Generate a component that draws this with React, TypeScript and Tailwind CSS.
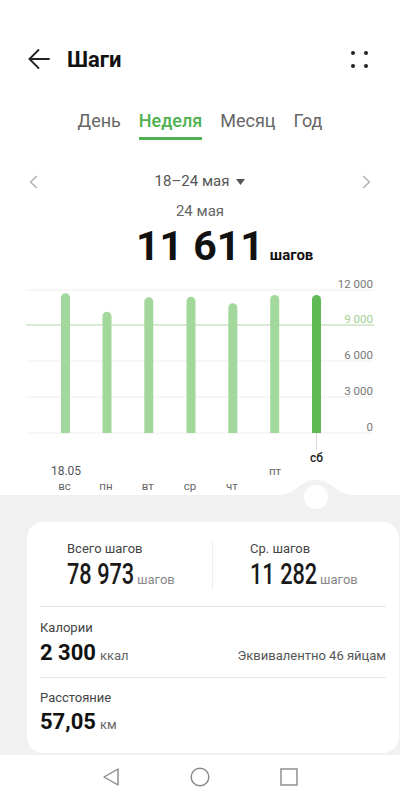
import React from "react";

const bars = [
  { x: 65.5, top: 293.3 },
  { x: 107, top: 311.7 },
  { x: 148.8, top: 297.3 },
  { x: 191, top: 296.7 },
  { x: 232.8, top: 303.3 },
  { x: 274.7, top: 295 },
  { x: 316.5, top: 295, active: true },
];

const gridLines = [
  { y: 290, label: "12 000" },
  { y: 325, label: "9 000", goal: true },
  { y: 361, label: "6 000" },
  { y: 397, label: "3 000" },
  { y: 433, label: "0" },
];

const tabs = ["День", "Неделя", "Месяц", "Год"];

const font = { fontFamily: "Roboto, 'Noto Sans', sans-serif" };

function barPath(cx: number, top: number, bottom: number, w: number) {
  const r = w / 2;
  const l = cx - r;
  const rt = cx + r;
  return `M ${l} ${bottom} L ${l} ${top + r} A ${r} ${r} 0 0 1 ${rt} ${top + r} L ${rt} ${bottom} Z`;
}

const Chart: React.FC = () => (
  <svg
    width={400}
    height={240}
    viewBox="0 270 400 240"
    className="relative z-10 -mb-[15px] block"
    style={font}
  >
    {gridLines.map((g) => (
      <g key={g.label}>
        <line
          x1={26}
          x2={374}
          y1={g.y}
          y2={g.y}
          stroke={g.goal ? "#c9e4c3" : "#eeeeee"}
          strokeWidth={g.goal ? 1.5 : 1}
        />
        <text
          x={373}
          y={g.y - 2.5}
          textAnchor="end"
          fontSize={11.5}
          fill={g.goal ? "#9fce94" : "#777777"}
        >
          {g.label}
        </text>
      </g>
    ))}
    {bars.map((b) => (
      <path
        key={b.x}
        d={barPath(b.x, b.top, 433, 9)}
        fill={b.active ? "#5fba56" : "#a3d89c"}
      />
    ))}
    <line x1={316.5} x2={316.5} y1={433} y2={450} stroke="#d6d6d6" strokeWidth={1} />
    <text x={316.5} y={462} textAnchor="middle" fontSize={12} fontWeight={500} fill="#222">
      сб
    </text>
    <text x={66} y={475} textAnchor="middle" fontSize={12} fill="#555">
      18.05
    </text>
    <text x={275} y={475} textAnchor="middle" fontSize={11.5} fill="#666">
      пт
    </text>
    {["вс", "пн", "вт", "ср", "чт"].map((d, i) => (
      <text key={d} x={bars[i].x - 1} y={490} textAnchor="middle" fontSize={11.5} fill="#666">
        {d}
      </text>
    ))}
    <rect x={0} y={495} width={400} height={15} fill="#f1f1f1" />
    <path
      d="M 278 495 C 298 495, 298 480, 316 480 C 334 480, 334 495, 354 495 Z"
      fill="#f1f1f1"
    />
    <circle cx={316} cy={497} r={12} fill="#ffffff" />
  </svg>
);

const StatNumber: React.FC<{ value: string; unit: string }> = ({ value, unit }) => (
  <div className="flex items-baseline h-[32px] mt-[1px]">
    <span className="inline-block w-[66px] origin-left scale-x-[0.75] whitespace-nowrap text-[29px] leading-[32px] font-medium text-[#1a1a1a]">
      {value}
    </span>
    <span className="ml-[4px] text-[13px] text-[#888]">{unit}</span>
  </div>
);

export default function App() {
  return (
    <div className="w-[400px] h-[800px] bg-white flex flex-col overflow-hidden" style={font}>
      <div className="h-[35px]" />

      {/* header */}
      <div className="h-[48px] flex items-center pl-[28px] pr-[32px]">
        <svg width={22} height={22} viewBox="0 0 22 22" fill="none" stroke="#222" strokeWidth={1.8} strokeLinecap="round" strokeLinejoin="round">
          <path d="M 21 11 H 1.5" />
          <path d="M 10.5 2 L 1.5 11 L 10.5 20" />
        </svg>
        <span className="ml-[17px] text-[22px] font-bold text-[#111]">Шаги</span>
        <svg className="ml-auto" width={17} height={17} viewBox="0 0 17 17" fill="#222">
          <circle cx={2} cy={2} r={2} />
          <circle cx={15} cy={2} r={2} />
          <circle cx={2} cy={15} r={2} />
          <circle cx={15} cy={15} r={2} />
        </svg>
      </div>

      {/* tabs */}
      <div className="mt-[25px] flex justify-center gap-[18px]">
        {tabs.map((t) => {
          const active = t === "Неделя";
          return (
            <div key={t} className="flex flex-col items-stretch">
              <span
                className={
                  active
                    ? "h-[26px] leading-[26px] text-[18px] font-medium text-[#4fb14f]"
                    : "h-[26px] leading-[26px] text-[18px] text-[#666]"
                }
              >
                {t}
              </span>
              <div className={active ? "mt-[3px] h-[2.5px] bg-[#4fb14f]" : "mt-[3px] h-[2.5px]"} />
            </div>
          );
        })}
      </div>

      {/* date nav */}
      <div className="mt-[30px] h-[24px] flex items-center justify-between px-[29px]">
        <svg width={9} height={14} viewBox="0 0 9 14" fill="none" stroke="#aaa" strokeWidth={1.3}>
          <path d="M 8 1 L 1.5 7 L 8 13" />
        </svg>
        <div className="flex items-center text-[15px] text-[#555]">
          <span>18–24 мая</span>
          <svg className="ml-[7px]" width={9} height={6} viewBox="0 0 9 6" fill="#555">
            <path d="M 0 0 H 9 L 4.5 6 Z" />
          </svg>
        </div>
        <svg width={9} height={14} viewBox="0 0 9 14" fill="none" stroke="#aaa" strokeWidth={1.3}>
          <path d="M 1 1 L 7.5 7 L 1 13" />
        </svg>
      </div>

      <div className="mt-[7px] h-[20px] leading-[20px] text-center text-[15px] text-[#666]">24 мая</div>

      <div className="mt-[1px] h-[48px] flex items-baseline pl-[136px]">
        <span className="text-[41px] leading-[48px] font-bold text-[#111]">11 611</span>
        <span className="ml-[6px] text-[15px] font-bold text-[#111]">шагов</span>
      </div>

      <Chart />

      {/* summary */}
      <div className="h-[260px] bg-[#f1f1f1] pt-[27px]">
        <div className="h-[231px] ml-[27px] mr-[1px] rounded-[16px] bg-white px-[13px]">
          <div className="flex pt-[19px]">
            <div className="w-[173px] pl-[27px] border-r border-[#eeeeee] mb-[6px]">
              <div className="text-[13px] leading-[16px] text-[#444]">Всего шагов</div>
              <StatNumber value="78 973" unit="шагов" />
            </div>
            <div className="pl-[37px]">
              <div className="text-[13px] leading-[16px] text-[#444]">Ср. шагов</div>
              <StatNumber value="11 282" unit="шагов" />
            </div>
          </div>
          <div className="mt-[10px] h-px bg-[#e6e6e6]" />

          <div className="mt-[13px] text-[13px] leading-[16px] text-[#444]">Калории</div>
          <div className="mt-[4px] h-[26px] flex items-baseline">
            <span className="text-[22px] leading-[26px] font-bold text-[#111]">2 300</span>
            <span className="ml-[4px] text-[13px] text-[#666]">ккал</span>
            <span className="ml-auto text-[13px] text-[#555]">Эквивалентно 46 яйцам</span>
          </div>
          <div className="mt-[11px] h-px bg-[#e6e6e6]" />

          <div className="mt-[12px] text-[13px] leading-[16px] text-[#444]">Расстояние</div>
          <div className="mt-[3px] h-[26px] flex items-baseline">
            <span className="text-[22px] leading-[26px] font-bold text-[#111]">57,05</span>
            <span className="ml-[4px] text-[13px] text-[#666]">км</span>
          </div>
        </div>
      </div>

      {/* system nav */}
      <div className="h-[45px] flex items-center justify-center gap-[70px]">
        <svg width={18} height={18} viewBox="0 0 18 18" fill="none" stroke="#888" strokeWidth={1.4} strokeLinejoin="round">
          <path d="M 16 1 L 2 9 L 16 17 Z" />
        </svg>
        <svg width={20} height={20} viewBox="0 0 20 20" fill="none" stroke="#888" strokeWidth={1.4}>
          <circle cx={10} cy={10} r={8.8} />
        </svg>
        <svg width={18} height={18} viewBox="0 0 18 18" fill="none" stroke="#888" strokeWidth={1.4}>
          <rect x={1} y={1} width={16} height={16} />
        </svg>
      </div>
    </div>
  );
}
